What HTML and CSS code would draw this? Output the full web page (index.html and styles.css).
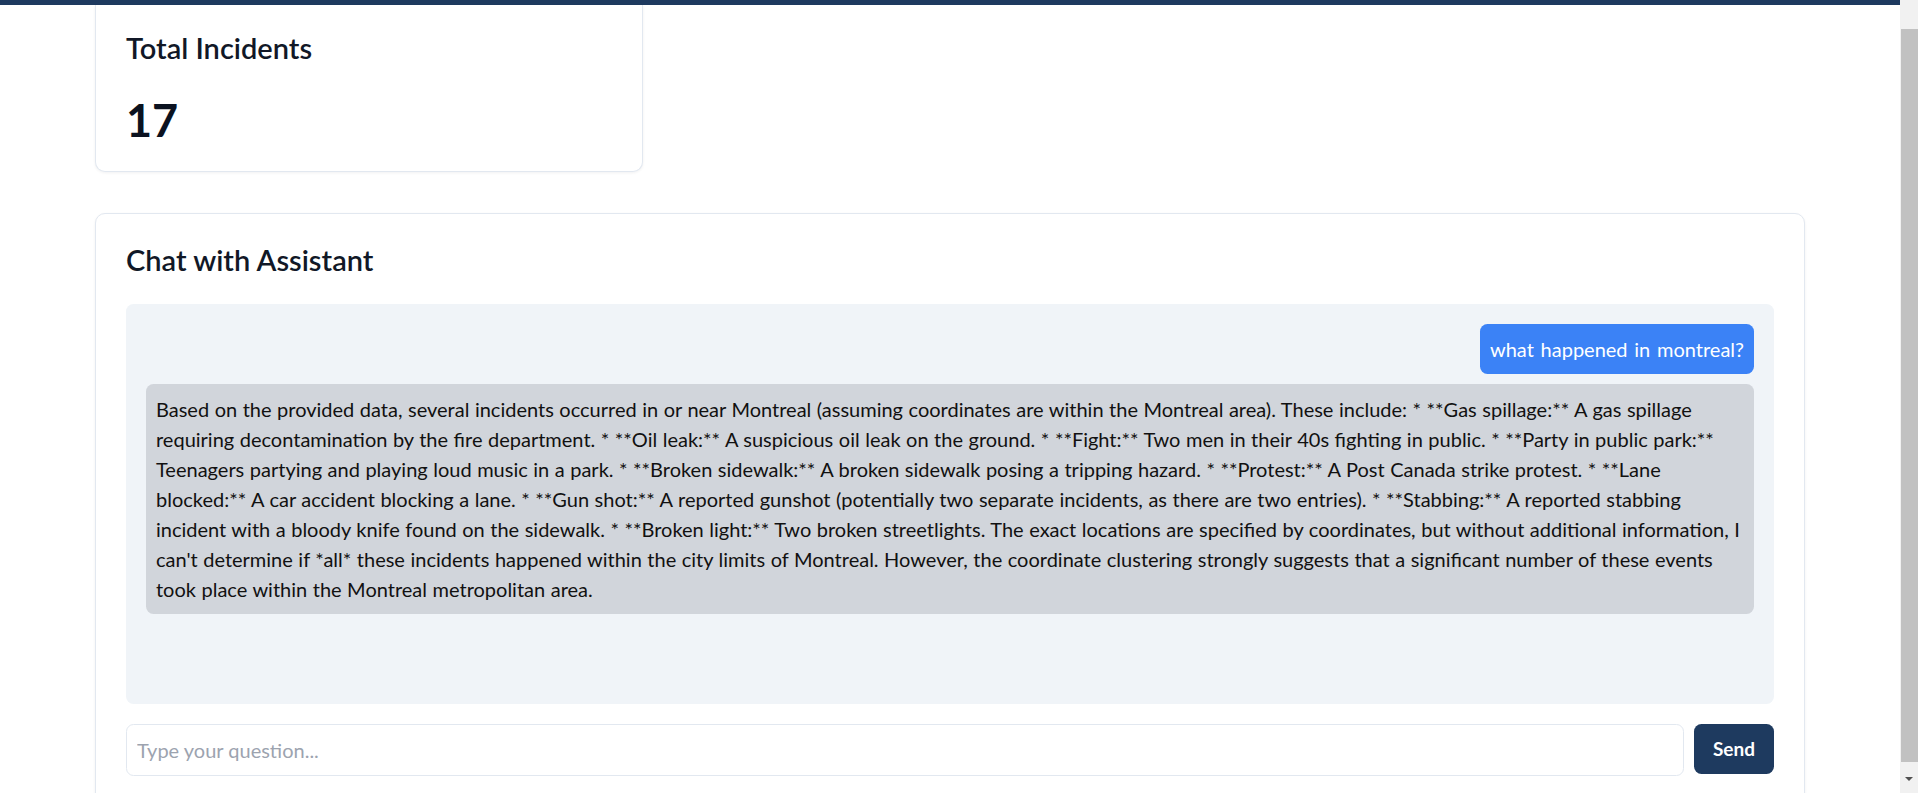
FILE: index.html
```html
<!DOCTYPE html>
<html lang="en">
<head>
<meta charset="utf-8">
<title>Incident Dashboard</title>
<link rel="stylesheet" href="styles.css">
</head>
<body>
<div class="page">
  <div class="topbar"></div>
  <main class="container">
    <section class="stats">
      <div class="card stat-card">
        <h2 class="stat-title">Total Incidents</h2>
        <p class="stat-value">17</p>
      </div>
    </section>
    <section class="card chat-card">
      <h2 class="chat-title">Chat with Assistant</h2>
      <div class="chat-log">
        <div class="msg msg-user">what happened in montreal?</div>
        <div class="msg msg-bot">Based on the provided data, several incidents occurred in or near Montreal (assuming coordinates are within the Montreal area). These include: * **Gas spillage:** A gas spillage requiring decontamination by the fire department. * **Oil leak:** A suspicious oil leak on the ground. * **Fight:** Two men in their 40s fighting in public. * **Party in public park:** Teenagers partying and playing loud music in a park. * **Broken sidewalk:** A broken sidewalk posing a tripping hazard. * **Protest:** A Post Canada strike protest. * **Lane blocked:** A car accident blocking a lane. * **Gun shot:** A reported gunshot (potentially two separate incidents, as there are two entries). * **Stabbing:** A reported stabbing incident with a bloody knife found on the sidewalk. * **Broken light:** Two broken streetlights. The exact locations are specified by coordinates, but without additional information, I can't determine if *all* these incidents happened within the city limits of Montreal. However, the coordinate clustering strongly suggests that a significant number of these events took place within the Montreal metropolitan area.</div>
      </div>
      <form class="chat-form">
        <input class="chat-input" type="text" placeholder="Type your question...">
        <button class="send-btn" type="button">Send</button>
      </form>
    </section>
  </main>
</div>
<div class="scrollbar">
  <div class="sb-space"></div>
  <div class="sb-thumb"></div>
  <div class="sb-arrow"><span class="sb-tri"></span></div>
</div>
</body>
</html>
```

FILE: styles.css
```css
html, body {
  margin: 0;
  padding: 0;
  height: 793px;
  overflow: hidden;
}
body {
  display: flex;
  background: #ffffff;
  font-family: "Lato", "Liberation Sans", sans-serif;
  color: #111827;
}
.page {
  flex: 1;
  min-width: 0;
  display: flex;
  flex-direction: column;
}
.topbar {
  height: 5px;
  background: #1e3a5f;
  flex: none;
}
.container {
  padding: 0 95px;
}
.stats {
  display: grid;
  grid-template-columns: repeat(3, 1fr);
  gap: 33px;
  margin-bottom: 41px;
}
.card {
  background: #ffffff;
  border: 1px solid #e2e8f0;
  border-radius: 10px;
  box-shadow: 0 1px 3px rgba(15, 23, 42, 0.06);
}
.stat-card {
  border-top: none;
  border-radius: 0 0 10px 10px;
  padding: 23px 30px 26px;
}
.stat-title {
  margin: 0 0 27px;
  font-size: 29px;
  line-height: 40px;
  font-weight: 600;
  color: #111827;
}
.stat-value {
  margin: 0;
  font-size: 45px;
  line-height: 50px;
  font-weight: 700;
  color: #0b1220;
}
.chat-card {
  padding: 28px 30px 30px;
}
.chat-title {
  margin: 0 0 26px;
  font-size: 29px;
  line-height: 36px;
  font-weight: 600;
}
.chat-log {
  height: 400px;
  box-sizing: border-box;
  padding: 20px;
  background: #f0f4f8;
  border-radius: 7.5px;
  display: flex;
  flex-direction: column;
  align-items: flex-end;
  gap: 10px;
  overflow: hidden;
}
.msg {
  font-size: 20px;
  line-height: 30px;
  padding: 10px;
  border-radius: 7.5px;
  word-spacing: 0.4px;
}
.msg-user {
  background: #3b82f6;
  color: #ffffff;
  word-spacing: 1.6px;
}
.msg-bot {
  align-self: stretch;
  background: #d1d5db;
  color: #111111;
}
.chat-form {
  margin: 20px 0 0;
  display: flex;
  gap: 10px;
}
.chat-input {
  flex: 1;
  min-width: 0;
  box-sizing: border-box;
  height: 52px;
  padding: 10px;
  border: 1px solid #e2e8f0;
  border-radius: 7.5px;
  font-family: inherit;
  font-size: 20px;
  line-height: 30px;
  color: #111827;
  outline: none;
}
.chat-input::placeholder {
  color: #9ca3af;
}
.send-btn {
  height: 50px;
  padding: 10px 19px;
  border: none;
  border-radius: 7.5px;
  background: #1e3a5f;
  color: #ffffff;
  font-family: inherit;
  font-size: 19px;
  line-height: 30px;
  font-weight: 700;
}
.scrollbar {
  width: 18px;
  flex: none;
  height: 793px;
  background: #f1f1f1;
  display: flex;
  flex-direction: column;
}
.sb-space {
  height: 29px;
}
.sb-thumb {
  flex: 1;
  margin-left: 1px;
  background: #c1c1c1;
}
.sb-arrow {
  height: 31px;
  display: flex;
  justify-content: center;
  padding-top: 15px;
  box-sizing: border-box;
}
.sb-tri {
  width: 0;
  height: 0;
  border-left: 4px solid transparent;
  border-right: 4px solid transparent;
  border-top: 4px solid #505050;
}
```
